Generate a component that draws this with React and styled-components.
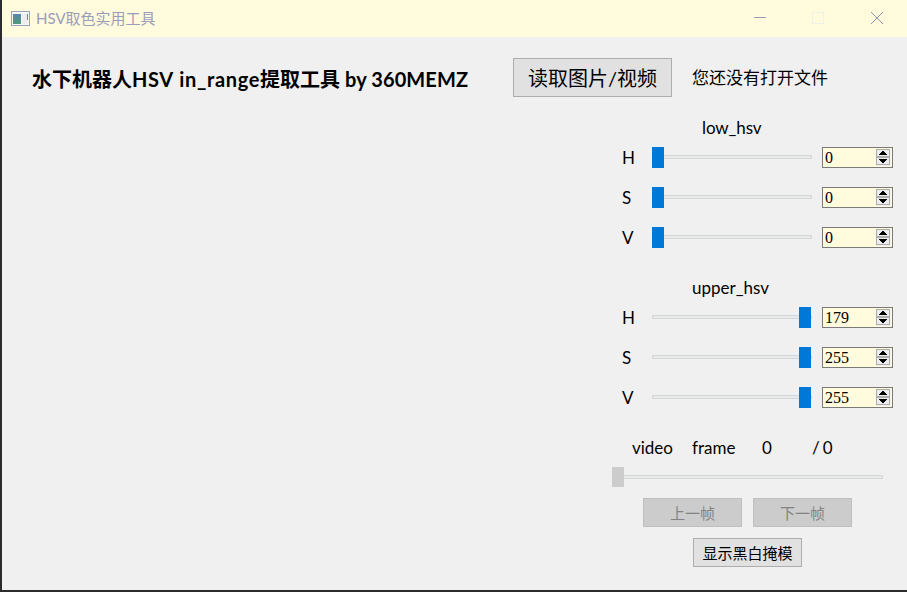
import React from "react";
import styled, { createGlobalStyle } from "styled-components";

const GlobalStyle = createGlobalStyle`
  * { box-sizing: border-box; }
  html, body { margin: 0; padding: 0; overflow: hidden; }
  body { font-family: Lato, "Noto Sans CJK SC", sans-serif; color: #000; }
`;

const Frame = styled.div`
  width: 907px;
  height: 592px;
  display: flex;
  flex-direction: column;
  background: #f0f0f0;
  border-left: 2px solid #2b2b2d;
  border-bottom: 2px solid #2b2b2b;
`;

const TitleBar = styled.header`
  height: 37px;
  flex: none;
  display: flex;
  align-items: center;
  padding-left: 9px;
  background: #fffbdc;
`;

const AppIcon = styled.svg`
  width: 19px;
  height: 16px;
  margin-right: 6px;
`;

const Caption = styled.span`
  flex: 1;
  font-size: 15px;
  line-height: 20px;
  padding-bottom: 2px;
  color: #9a9dba;
`;

const WindowControls = styled.svg`
  width: 154px;
  height: 37px;
`;

const Heading = styled.div`
  height: 83px;
  flex: none;
  display: flex;
  align-items: flex-start;
  padding: 21px 0 0 30px;
`;

const Title = styled.h1`
  width: 481px;
  margin: 0;
  font-size: 20px;
  line-height: 42px;
  font-weight: 700;
  white-space: pre;
`;

const Latin = styled.span`
  letter-spacing: ${(p) => p.$gap || 0}px;
`;

const Button = styled.button`
  width: ${(p) => p.$w}px;
  height: ${(p) => p.$h || 29}px;
  flex: none;
  padding: ${(p) => p.$drop || 0}px 0 0;
  border: 1px solid #adadad;
  border-radius: 0;
  background: #e1e1e1;
  color: #000;
  font-family: inherit;
  font-size: ${(p) => p.$size || 15}px;
  line-height: 1;
  white-space: nowrap;
  &:disabled {
    border-color: #bfbfbf;
    background: #cccccc;
    color: #838383;
  }
`;

const Status = styled.span`
  margin-left: 20px;
  font-size: 17px;
  line-height: 40px;
  white-space: nowrap;
`;

const Panel = styled.aside`
  width: 295px;
  margin-left: auto;
`;

const Group = styled.section`
  height: 160px;
`;

const GroupName = styled.div`
  height: 27px;
  padding-left: ${(p) => p.$indent}px;
  font-size: 17px;
  line-height: 16px;
  letter-spacing: ${(p) => p.$gap || 0}px;
`;

const ChannelRow = styled.div`
  height: 21px;
  margin-bottom: 19px;
  display: flex;
  align-items: center;
  padding-left: 10px;
`;

const Channel = styled.span`
  width: 30px;
  font-size: 17px;
  line-height: 21px;
`;

const Track = styled.div`
  width: ${(p) => p.$w}px;
  height: ${(p) => p.$h || 21}px;
  flex: none;
  display: flex;
  justify-content: ${(p) => (p.$end ? "flex-end" : "flex-start")};
  padding-right: ${(p) => (p.$end ? 1 : 0)}px;
  background:
    linear-gradient(#e7eaea, #e7eaea) 1px 9px / calc(100% - 2px) 2px no-repeat,
    linear-gradient(#d6d6d6, #d6d6d6) 0 8px / 100% 4px no-repeat;
`;

const Thumb = styled.div`
  width: 12px;
  height: 100%;
  background: ${(p) => (p.$disabled ? "#cccccc" : "#0078d7")};
`;

const SpinBox = styled.div`
  width: 71px;
  height: 21px;
  margin-left: 10px;
  display: flex;
  align-items: center;
  justify-content: space-between;
  border: 1px solid #7a7a7a;
  background: #fffbdc;
  padding: 0 1px 0 2px;
  font: 16px/19px "Liberation Serif", serif;
`;

const Arrows = styled.svg`
  width: 15px;
  height: 17px;
`;

const VideoRow = styled.div`
  height: 20px;
  display: grid;
  grid-template-columns: 60px 70px 50px 60px;
  padding-left: 20px;
  font-size: 17px;
  line-height: 16px;
  white-space: pre;
`;

const VideoSlider = styled.div`
  height: 20px;
  margin-top: 7px;
`;

const ButtonRow = styled.div`
  display: flex;
  gap: 11px;
  margin-top: 11px;
  padding-left: ${(p) => p.$indent}px;
`;

function Slider({ w, h, end, disabled }) {
  return (
    <Track $w={w} $h={h} $end={end}>
      <Thumb $disabled={disabled} />
    </Track>
  );
}

function Spinner({ value }) {
  return (
    <SpinBox>
      <span>{value}</span>
      <Arrows viewBox="0 0 15 17" shapeRendering="crispEdges">
        <rect width="15" height="17" fill="#f0f0f0" />
        <path d="M.5 .5h13v7H.5zM.5 8.5h13v7H.5z" fill="#ececec" stroke="#adadad" />
        <path d="M6 2h2v1h1v1h1v1h1v1H3V5h1V4h1V3h1z" fill="#000" />
        <path d="M3 10h8v1h-1v1H9v1H8v1H6v-1H5v-1H4v-1H3z" fill="#000" />
      </Arrows>
    </SpinBox>
  );
}

function HsvGroup({ name, indent, gap, values, end }) {
  return (
    <Group>
      <GroupName $indent={indent} $gap={gap}>{name}</GroupName>
      {["H", "S", "V"].map((channel, i) => (
        <ChannelRow key={channel}>
          <Channel>{channel}</Channel>
          <Slider w={160} end={end} />
          <Spinner value={values[i]} />
        </ChannelRow>
      ))}
    </Group>
  );
}

export default function App() {
  return (
    <>
      <GlobalStyle />
      <Frame>
        <TitleBar>
          <AppIcon viewBox="0 0 19 16" shapeRendering="crispEdges">
            <defs>
              <linearGradient id="pane" x1="0" y1="0" x2="0" y2="1">
                <stop stopColor="#5686ac" />
                <stop offset="1" stopColor="#4f9a78" />
              </linearGradient>
            </defs>
            <path d="M.5 .5h18v14H.5z" fill="#f4f7f4" stroke="#9aa3bd" />
            <path d="M2 3h8v10H2z" fill="url(#pane)" />
            <path d="M11 3h5v10h-5z" fill="#e9efec" />
            <path d="M16 3h1v6h-1z" fill="#5b9790" />
          </AppIcon>
          <Caption>HSV取色实用工具</Caption>
          <WindowControls viewBox="0 0 154 37" fill="none">
            <path d="M1 17.5h12" stroke="#999eb5" />
            <path d="M59.5 12.5h11v11h-11z" stroke="#edf1ea" />
            <path d="M118 12l12 12M130 12l-12 12" stroke="#8f96ae" />
          </WindowControls>
        </TitleBar>
        <Heading>
          <Title>
            水下机器人<Latin $gap={0.6}>HSV</Latin><Latin $gap={0.65}> in_range</Latin>提取工具<Latin $gap={0.1}> by 360MEMZ</Latin>
          </Title>
          <Button $w={159} $h={39} $size={20}>读取图片/视频</Button>
          <Status>您还没有打开文件</Status>
        </Heading>
        <Panel>
          <HsvGroup name="low_hsv" indent={90} gap={-0.1} values={[0, 0, 0]} />
          <HsvGroup name="upper_hsv" indent={80} values={[179, 255, 255]} end />
          <VideoRow>
            <span>video</span>
            <span>frame</span>
            <span>0</span>
            <Latin $gap={-0.6}>/ 0</Latin>
          </VideoRow>
          <VideoSlider>
            <Slider w={271} h={20} disabled />
          </VideoSlider>
          <ButtonRow $indent={31}>
            <Button $w={99} $drop={2} disabled>上一帧</Button>
            <Button $w={99} $drop={2} disabled>下一帧</Button>
          </ButtonRow>
          <ButtonRow $indent={81}>
            <Button $w={109} $drop={2}>显示黑白掩模</Button>
          </ButtonRow>
        </Panel>
      </Frame>
    </>
  );
}
